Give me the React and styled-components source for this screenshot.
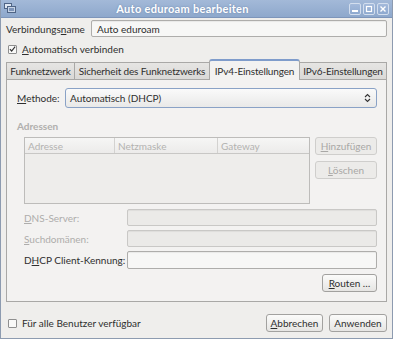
import React from "react";
import styled, { createGlobalStyle } from "styled-components";

const GlobalStyle = createGlobalStyle`
  html, body {
    margin: 0;
    padding: 0;
    background: #efeeec;
  }
  * {
    box-sizing: border-box;
  }
`;

const Window = styled.div`
  width: 393px;
  height: 339px;
  display: flex;
  flex-direction: column;
  background: #efeeec;
  border: 1px solid #8d9bb0;
  border-top: none;
  font-family: Lato, "Open Sans", sans-serif;
  font-size: 10px;
  color: #2e2e2e;
  overflow: hidden;
`;

const TitleBar = styled.div`
  height: 18px;
  flex-shrink: 0;
  display: flex;
  align-items: center;
  padding: 0 3px 0 3px;
  background: linear-gradient(#a3b9d8, #8ea8cc);
  border-bottom: 1px solid #7d95ba;
`;

const Title = styled.div`
  flex: 1;
  text-align: center;
  color: #fff;
  font-weight: bold;
  font-size: 11px;
  letter-spacing: 0.3px;
  text-shadow: 0 0 2px #6a83aa;
`;

const WinButtons = styled.div`
  display: flex;
  gap: 2px;
`;

const WinButton = styled.div`
  width: 12px;
  height: 12px;
  border: 1px solid #d3deee;
  border-radius: 2px;
  background: linear-gradient(#a4badb, #8ea9cf);
  display: flex;
  align-items: center;
  justify-content: center;
`;

const Body = styled.div`
  flex: 1;
  display: flex;
  flex-direction: column;
  padding: 2px 5px 0 5px;
`;

const NameRow = styled.div`
  display: flex;
  align-items: center;
  height: 17px;
`;

const NameLabel = styled.div`
  width: 85px;
`;

const TextInput = styled.div`
  flex: 1;
  height: ${(p) => p.$h || 17}px;
  border: 1px solid ${(p) => (p.$disabled ? "#c9c8c6" : "#aeadab")};
  border-radius: 2px;
  background: ${(p) => (p.$disabled ? "#ebeae8" : "#f7f7f6")};
  box-shadow: inset 0 1px 1px rgba(0, 0, 0, 0.06);
  padding: 0 5px;
  display: flex;
  align-items: center;
`;

const CheckRow = styled.div`
  display: flex;
  align-items: center;
  gap: 5px;
  height: 14px;
  margin-top: ${(p) => p.$mt || 0}px;
  padding-left: 2px;
`;

const CheckBox = styled.div`
  width: 9px;
  height: 9px;
  border: 1px solid #8f8f8f;
  border-radius: 1px;
  background: #f9f9f8;
  display: flex;
  align-items: center;
  justify-content: center;
`;

const TabBar = styled.div`
  display: flex;
  align-items: flex-end;
  height: 20px;
  margin-top: 4px;
  position: relative;
  z-index: 1;
`;

const Tab = styled.div`
  width: ${(p) => p.$w}px;
  height: ${(p) => (p.$active ? 21 : 18)}px;
  display: flex;
  align-items: center;
  justify-content: center;
  letter-spacing: -0.15px;
  border: 1px solid #a9a8a6;
  border-bottom: ${(p) => (p.$active ? "none" : "1px solid #a9a8a6")};
  border-top: ${(p) => (p.$active ? "2px solid #7f9ccb" : "1px solid #a9a8a6")};
  border-radius: ${(p) => (p.$active ? "3px 3px 0 0" : "0")};
  margin-left: -1px;
  background: ${(p) => (p.$active ? "#f3f2f1" : "linear-gradient(#e6e5e3, #dad9d7)")};
  white-space: nowrap;
  &:first-child {
    margin-left: 0;
  }
`;

const Panel = styled.div`
  height: 223px;
  margin-top: -1px;
  border: 1px solid #a9a8a6;
  background: #f3f2f1;
  display: flex;
  flex-direction: column;
  padding: 8px 9px 0 10px;
`;

const MethodRow = styled.div`
  display: flex;
  align-items: center;
  height: 20px;
`;

const MethodLabel = styled.div`
  width: 48px;
`;

const Combo = styled.div`
  flex: 1;
  height: 20px;
  border: 1px solid #8aa2c6;
  border-radius: 3px;
  background: linear-gradient(#fafafa, #e9e9e8);
  display: flex;
  align-items: center;
  justify-content: space-between;
  padding: 0 5px 0 4px;
`;

const SectionTitle = styled.div`
  font-weight: bold;
  color: #b0afad;
  margin-top: 12px;
  height: 12px;
  line-height: 12px;
`;

const AddrArea = styled.div`
  display: flex;
  gap: 5px;
  margin-top: 5px;
  padding-left: 7px;
  height: 67px;
`;

const Table = styled.div`
  width: 288px;
  border: 1px solid #bdbcba;
  background: #eeedeb;
  display: flex;
  flex-direction: column;
`;

const TableHead = styled.div`
  display: grid;
  grid-template-columns: 89px 103px 1fr;
  height: 16px;
  border-bottom: 1px solid #c8c7c5;
  background: linear-gradient(#f6f6f5, #ecebea);
`;

const HeadCell = styled.div`
  color: #b3b2b0;
  padding-left: 3px;
  display: flex;
  align-items: center;
  border-left: ${(p) => (p.$first ? "none" : "1px solid #d3d2d0")};
`;

const SideButtons = styled.div`
  display: flex;
  flex-direction: column;
  gap: 6px;
`;

const Button = styled.div`
  width: ${(p) => p.$w}px;
  height: 18px;
  border: 1px solid ${(p) => (p.$disabled ? "#cfcecc" : "#a2a19f")};
  border-radius: 3px;
  background: ${(p) =>
    p.$disabled ? "#ecebe9" : "linear-gradient(#fbfbfa, #e6e5e3)"};
  color: ${(p) => (p.$disabled ? "#a9a8a6" : "#2e2e2e")};
  display: flex;
  align-items: center;
  justify-content: center;
`;

const FieldRow = styled.div`
  display: flex;
  align-items: center;
  margin-top: ${(p) => p.$mt}px;
  padding-left: 7px;
`;

const FieldLabel = styled.div`
  width: 103px;
  color: ${(p) => (p.$disabled ? "#aeadab" : "#2e2e2e")};
`;

const RouteRow = styled.div`
  display: flex;
  justify-content: flex-end;
  margin-top: 5px;
`;

const Footer = styled.div`
  display: flex;
  align-items: center;
  justify-content: space-between;
  margin-top: 12px;
`;

const FooterButtons = styled.div`
  display: flex;
  gap: 6px;
`;

const U = styled.span`
  text-decoration: underline;
  text-underline-offset: 1px;
`;

const Tick = () => (
  <svg width="8" height="8" viewBox="0 0 8 8">
    <path d="M1 4.2 L3 6.3 L7 1.2" fill="none" stroke="#333" strokeWidth="1.3" />
  </svg>
);

const App = () => {
  return (
    <>
      <GlobalStyle />
      <Window>
        <TitleBar>
          <svg width="12" height="11" viewBox="0 0 12 11">
            <rect x="0.5" y="0.5" width="7" height="5" fill="#dfe7f2" stroke="#4f6485" />
            <rect x="3.5" y="3.5" width="8" height="6" fill="#c7d4e6" stroke="#4f6485" />
            <rect x="5" y="5" width="5" height="3" fill="#7d94b8" />
          </svg>
          <Title>Auto eduroam bearbeiten</Title>
          <WinButtons>
            <WinButton>
              <svg width="8" height="8" viewBox="0 0 8 8">
                <rect x="1" y="5" width="6" height="2" fill="#fff" />
              </svg>
            </WinButton>
            <WinButton>
              <svg width="8" height="8" viewBox="0 0 8 8">
                <rect x="1.5" y="1.5" width="5" height="5" fill="none" stroke="#fff" strokeWidth="1.2" />
              </svg>
            </WinButton>
            <WinButton>
              <svg width="8" height="8" viewBox="0 0 8 8">
                <path d="M1.5 1.5 L6.5 6.5 M6.5 1.5 L1.5 6.5" stroke="#fff" strokeWidth="1.4" />
              </svg>
            </WinButton>
          </WinButtons>
        </TitleBar>

        <Body>
          <NameRow>
            <NameLabel>
              Verbindungs<U>n</U>ame
            </NameLabel>
            <TextInput>Auto eduroam</TextInput>
          </NameRow>

          <CheckRow $mt={5}>
            <CheckBox>
              <Tick />
            </CheckBox>
            <span>
              <U>A</U>utomatisch verbinden
            </span>
          </CheckRow>

          <TabBar>
            <Tab $w={69}>Funknetzwerk</Tab>
            <Tab $w={136}>Sicherheit des Funknetzwerks</Tab>
            <Tab $w={91} $active>
              IPv4-Einstellungen
            </Tab>
            <Tab $w={88}>IPv6-Einstellungen</Tab>
          </TabBar>

          <Panel>
            <MethodRow>
              <MethodLabel>
                <U>M</U>ethode:
              </MethodLabel>
              <Combo>
                <span>Automatisch (DHCP)</span>
                <svg width="7" height="10" viewBox="0 0 7 10">
                  <path d="M1 4 L3.5 1.5 L6 4 M1 6 L3.5 8.5 L6 6" fill="none" stroke="#333" strokeWidth="1.1" />
                </svg>
              </Combo>
            </MethodRow>

            <SectionTitle>Adressen</SectionTitle>

            <AddrArea>
              <Table>
                <TableHead>
                  <HeadCell $first>Adresse</HeadCell>
                  <HeadCell>Netzmaske</HeadCell>
                  <HeadCell>Gateway</HeadCell>
                </TableHead>
              </Table>
              <SideButtons>
                <Button $w={62} $disabled>
                  <span>
                    <U>H</U>inzufügen
                  </span>
                </Button>
                <Button $w={62} $disabled>
                  <span>
                    <U>L</U>öschen
                  </span>
                </Button>
              </SideButtons>
            </AddrArea>

            <FieldRow $mt={5}>
              <FieldLabel $disabled>
                <U>D</U>NS-Server:
              </FieldLabel>
              <TextInput $disabled />
            </FieldRow>
            <FieldRow $mt={4}>
              <FieldLabel $disabled>
                <U>S</U>uchdomänen:
              </FieldLabel>
              <TextInput $disabled />
            </FieldRow>
            <FieldRow $mt={4}>
              <FieldLabel>
                D<U>H</U>CP Client-Kennung:
              </FieldLabel>
              <TextInput $h={18} />
            </FieldRow>

            <RouteRow>
              <Button $w={55}>
                <span>
                  <U>R</U>outen …
                </span>
              </Button>
            </RouteRow>
          </Panel>

          <Footer>
            <CheckRow>
              <CheckBox />
              <span>Für alle Benutzer verfügbar</span>
            </CheckRow>
            <FooterButtons>
              <Button $w={57}>
                <span>
                  <U>A</U>bbrechen
                </span>
              </Button>
              <Button $w={58}>Anwenden</Button>
            </FooterButtons>
          </Footer>
        </Body>
      </Window>
    </>
  );
};

export default App;
